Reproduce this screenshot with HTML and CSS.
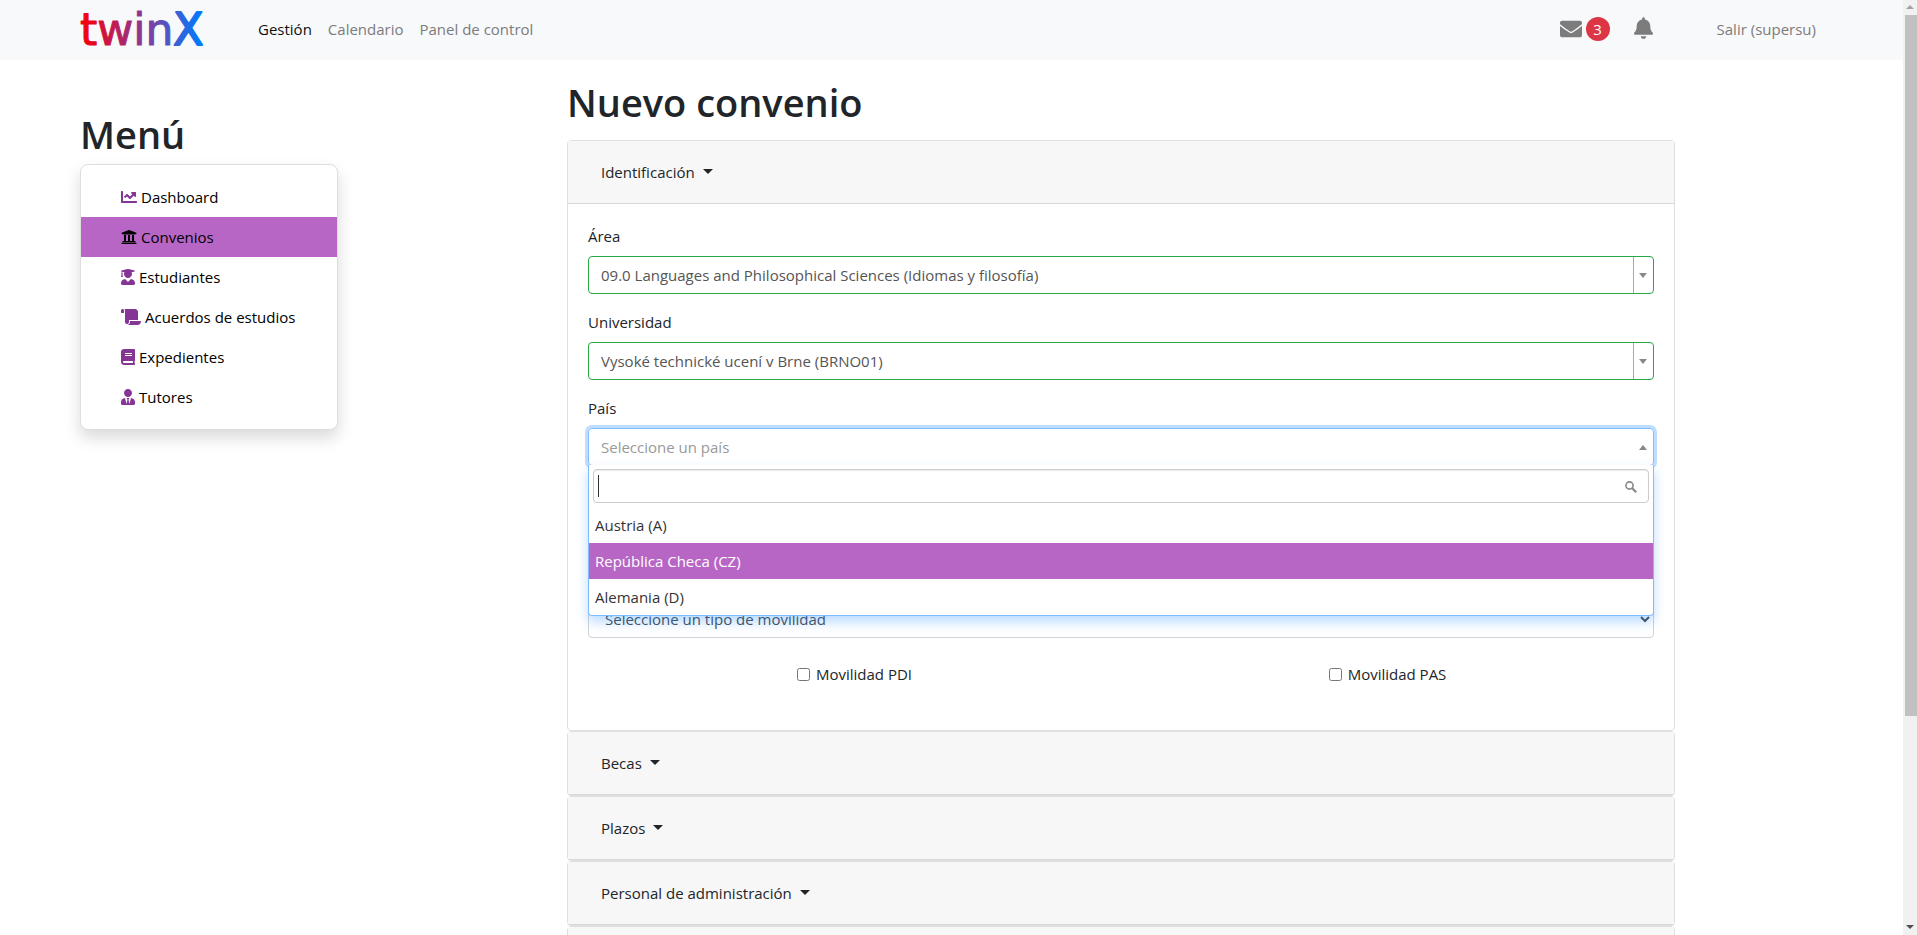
FILE: index.html
```html
<!DOCTYPE html>
<html lang="es">
<head>
<meta charset="utf-8">
<title>twinX - Nuevo convenio</title>
<link rel="stylesheet" href="styles.css">
</head>
<body>
<div class="page">
  <header class="navbar">
    <a class="brand" href="#" aria-label="twinX">
      <svg class="logo" width="136" height="58" viewBox="0 0 136 58">
        <defs>
          <linearGradient id="brand-gradient" gradientUnits="userSpaceOnUse" x1="8" y1="0" x2="122" y2="0">
            <stop offset="0" stop-color="#f00014"/>
            <stop offset="0.5" stop-color="#893a9a"/>
            <stop offset="1" stop-color="#007bff"/>
          </linearGradient>
        </defs>
        <text class="logo-word" x="1" y="45" fill="url(#brand-gradient)" stroke="url(#brand-gradient)" stroke-linejoin="round">twin<tspan class="logo-x">X</tspan></text>
      </svg>
    </a>
    <nav class="nav-links">
      <a class="nav-link current" href="#">Gestión</a>
      <a class="nav-link" href="#">Calendario</a>
      <a class="nav-link" href="#">Panel de control</a>
    </nav>
    <div class="nav-tools">
      <a class="mail" href="#" aria-label="Mensajes">
        <svg class="tool-icon" width="22" height="22" viewBox="0 0 512 512"><path d="M502.3 190.8c3.9-3.1 9.7-.2 9.7 4.7V400c0 26.5-21.5 48-48 48H48c-26.5 0-48-21.5-48-48V195.6c0-5 5.7-7.8 9.7-4.7 22.4 17.4 52.1 39.5 154.1 113.6 21.1 15.4 56.7 47.8 92.2 47.6 35.7.3 72-32.8 92.3-47.6 102-74.1 131.6-96.3 154-113.7zM256 320c23.2.4 56.6-29.2 73.4-41.4 132.7-96.3 142.8-104.7 173.4-128.7 5.8-4.5 9.2-11.5 9.2-18.9v-19c0-26.5-21.5-48-48-48H48c-26.5 0-48 21.5-48 48v19c0 7.4 3.4 14.3 9.2 18.9 30.6 23.9 40.7 32.4 173.4 128.7 16.8 12.2 50.2 41.8 73.4 41.4z"/></svg>
        <span class="badge">3</span>
      </a>
      <a class="bell" href="#" aria-label="Notificaciones">
        <svg class="tool-icon" width="19" height="22" viewBox="0 0 448 512"><path d="M224 512c35.32 0 63.97-28.65 63.97-64H160.03c0 35.35 28.65 64 63.97 64zm215.39-149.71c-19.32-20.76-55.47-51.99-55.47-154.29 0-77.7-54.48-139.9-127.94-155.16V32c0-17.67-14.32-32-31.98-32s-31.98 14.33-31.98 32v20.84C118.56 68.1 64.08 130.3 64.08 208c0 102.3-36.15 133.53-55.47 154.29-6 6.45-8.66 14.16-8.61 21.71.11 16.4 12.98 32 32.1 32h383.8c19.12 0 32-15.6 32.1-32 .05-7.55-2.61-15.27-8.61-21.71z"/></svg>
      </a>
      <a class="nav-link" href="#">Salir (supersu)</a>
    </div>
  </header>

  <div class="layout">
    <aside class="sidebar">
      <h2 class="title">Menú</h2>
      <nav class="menu">
        <a class="menu-item" href="#"><svg width="16" height="16" viewBox="0 0 512 512"><path d="M496 384H64V80c0-8.84-7.16-16-16-16H16C7.16 64 0 71.16 0 80v336c0 17.67 14.33 32 32 32h464c8.84 0 16-7.16 16-16v-32c0-8.84-7.16-16-16-16zM464 96H345.94c-21.38 0-32.09 25.85-16.97 40.97l32.4 32.4L288 242.75l-73.37-73.37c-12.5-12.5-32.76-12.5-45.25 0l-68.69 68.69c-6.25 6.25-6.25 16.38 0 22.63l22.62 22.62c6.25 6.25 16.38 6.25 22.63 0L192 237.25l73.37 73.37c12.5 12.5 32.76 12.5 45.25 0l96-96 32.4 32.4c15.12 15.12 40.97 4.41 40.97-16.97V112c.01-8.84-7.15-16-15.99-16z"/></svg>Dashboard</a>
        <a class="menu-item active" href="#"><svg width="16" height="16" viewBox="0 0 512 512"><path d="M496 128v16a8 8 0 0 1-8 8h-24v12c0 6.627-5.373 12-12 12H60c-6.627 0-12-5.373-12-12v-12H24a8 8 0 0 1-8-8v-16a8 8 0 0 1 4.941-7.392l232-88a7.996 7.996 0 0 1 6.118 0l232 88A8 8 0 0 1 496 128zm-24 304H40c-13.255 0-24 10.745-24 24v16a8 8 0 0 0 8 8h464a8 8 0 0 0 8-8v-16c0-13.255-10.745-24-24-24zM96 192v192H60c-6.627 0-12 5.373-12 12v20h416v-20c0-6.627-5.373-12-12-12h-36V192h-64v192h-64V192h-64v192h-64V192H96z"/></svg>Convenios</a>
        <a class="menu-item" href="#"><svg width="14" height="16" viewBox="0 0 448 512"><path d="M319.4 320.6L224 416l-95.4-95.4C57.1 323.7 0 382.2 0 454.4v9.6c0 26.5 21.5 48 48 48h352c26.5 0 48-21.5 48-48v-9.6c0-72.2-57.1-130.7-128.6-133.8zM13.6 79.8l6.4 1.5v58.4c-7 4.2-12 11.5-12 20.3 0 8.4 4.6 15.4 11.1 19.7L3.5 242c-1.7 6.9 2.1 14 7.6 14h41.8c5.5 0 9.3-7.1 7.6-14l-15.6-62.3C51.4 175.4 56 168.4 56 160c0-8.8-5-16.1-12-20.3V87.1l66 15.9c-8.6 17.2-14 36.4-14 57 0 70.7 57.3 128 128 128s128-57.3 128-128c0-20.6-5.3-39.8-14-57l96.3-23.2c18.2-4.4 18.2-27.1 0-31.5l-190.4-46c-13-3.1-26.7-3.1-39.7 0L13.6 48.2c-18.1 4.4-18.1 27.2 0 31.6z"/></svg>Estudiantes</a>
        <a class="menu-item" href="#"><svg width="20" height="16" viewBox="0 0 640 512"><path d="M48 0C21.53 0 0 21.53 0 48v64c0 8.84 7.16 16 16 16h80V48C96 21.53 74.47 0 48 0zm208 412.57V352h288V96c0-52.94-43.06-96-96-96H111.59C121.74 13.41 128 29.92 128 48v368c0 38.87 34.65 69.65 74.75 63.12C234.22 474 256 444.46 256 412.57zM288 384v32c0 52.93-43.06 96-96 96h336c61.86 0 112-50.14 112-112 0-8.84-7.16-16-16-16H288z"/></svg>Acuerdos de estudios</a>
        <a class="menu-item" href="#"><svg width="14" height="16" viewBox="0 0 448 512"><path d="M448 360V24c0-13.3-10.7-24-24-24H96C43 0 0 43 0 96v320c0 53 43 96 96 96h328c13.3 0 24-10.7 24-24v-16c0-7.5-3.5-14.3-8.9-18.7-4.2-15.4-4.2-59.3 0-74.7 5.4-4.3 8.9-11.1 8.9-18.6zM128 134c0-3.3 2.7-6 6-6h212c3.3 0 6 2.7 6 6v20c0 3.3-2.7 6-6 6H134c-3.3 0-6-2.7-6-6v-20zm0 64c0-3.3 2.7-6 6-6h212c3.3 0 6 2.7 6 6v20c0 3.3-2.7 6-6 6H134c-3.3 0-6-2.7-6-6v-20zm253.4 250H96c-17.7 0-32-14.3-32-32 0-17.6 14.4-32 32-32h285.4c-1.9 17.1-1.9 46.9 0 64z"/></svg>Expedientes</a>
        <a class="menu-item" href="#"><svg width="14" height="16" viewBox="0 0 448 512"><path d="M224 256c70.7 0 128-57.3 128-128S294.7 0 224 0 96 57.3 96 128s57.3 128 128 128zm95.8 32.6L272 480l-32-136 32-56h-96l32 56-32 136-47.8-191.4C56.9 292 0 350.3 0 422.4V464c0 26.5 21.5 48 48 48h352c26.5 0 48-21.5 48-48v-41.6c0-72.1-56.9-130.4-128.2-133.8z"/></svg>Tutores</a>
      </nav>
    </aside>

    <main class="content">
      <h1 class="title">Nuevo convenio</h1>

      <section class="card">
        <div class="card-header"><button class="toggle" type="button" aria-expanded="true">Identificación</button></div>
        <form class="card-body">
          <div class="field">
            <label for="area">Área</label>
            <div class="picker valid">
              <select id="area"><option>09.0 Languages and Philosophical Sciences (Idiomas y filosofía)</option></select>
              <span class="arrow"></span>
            </div>
          </div>
          <div class="field">
            <label for="universidad">Universidad</label>
            <div class="picker valid">
              <select id="universidad"><option>Vysoké technické ucení v Brne (BRNO01)</option></select>
              <span class="arrow"></span>
            </div>
          </div>
          <div class="field">
            <label for="pais">País</label>
            <div class="picker open">
              <select id="pais"><option>Seleccione un país</option></select>
              <span class="arrow"></span>
              <div class="dropdown">
                <div class="search">
                  <input class="search-input" type="text" aria-label="Buscar país">
                  <span class="text-cursor"></span>
                  <svg class="search-icon" width="12" height="12" viewBox="0 0 12 12"><circle cx="4.5" cy="4.5" r="3.6" fill="none" stroke="#888" stroke-width="1.6"/><path d="M7.2 7.2L11.2 11.2" stroke="#888" stroke-width="2.2"/></svg>
                </div>
                <ul class="options" role="listbox">
                  <li class="option" role="option">Austria (A)</li>
                  <li class="option highlighted" role="option" aria-selected="true">República Checa (CZ)</li>
                  <li class="option" role="option">Alemania (D)</li>
                </ul>
              </div>
            </div>
          </div>
          <div class="field mobility">
            <select class="native-select" aria-label="Tipo de movilidad"><option>Seleccione un tipo de movilidad</option></select>
          </div>
          <div class="checks">
            <label class="check" for="pdi"><input id="pdi" type="checkbox">Movilidad PDI</label>
            <label class="check" for="pas"><input id="pas" type="checkbox">Movilidad PAS</label>
          </div>
        </form>
      </section>
      <section class="card"><div class="card-header"><button class="toggle" type="button">Becas</button></div></section>
      <section class="card"><div class="card-header"><button class="toggle" type="button">Plazos</button></div></section>
      <section class="card"><div class="card-header"><button class="toggle" type="button">Personal de administración</button></div></section>
      <section class="card"><div class="card-header"></div></section>
    </main>
  </div>
</div>
<div class="scrollbar" aria-hidden="true">
  <span class="scroll-up"></span>
  <span class="scroll-thumb"></span>
  <span class="scroll-down"></span>
</div>
</body>
</html>
```
FILE: styles.css
```css
* { box-sizing: border-box; }

body {
  margin: 0;
  display: flex;
  height: 100vh;
  overflow: hidden;
  background: #fff;
  color: #212529;
  font-family: "Open Sans", "Noto Sans", sans-serif;
  font-size: 15px;
  line-height: 24px;
}

a { color: inherit; text-decoration: none; }

button, input, select { font: inherit; color: inherit; }

.page { flex: 1; min-width: 0; overflow: hidden; }

/* Top bar */
.navbar {
  display: flex;
  align-items: center;
  height: 60px;
  padding: 0 79px 2px;
  background: #f8f9fa;
}
.brand { display: flex; margin-right: 35px; }
.logo { display: block; }
.logo-word {
  font-family: "DejaVu Sans", sans-serif;
  font-size: 44px;
  stroke-width: 1;
}
.logo-x { stroke-width: 2; }
.nav-links { display: flex; }
.nav-link { padding: 0 8px; color: #7c7c7d; }
.nav-link.current { color: #111; }
.nav-tools { display: flex; align-items: center; margin-left: auto; }
.mail { display: flex; align-items: center; gap: 4px; }
.tool-icon { display: block; fill: #7c7c7c; }
.badge {
  width: 24px;
  height: 24px;
  border-radius: 50%;
  background: #dc3545;
  color: #fff;
  text-align: center;
}
.bell { margin: 0 56px 2px 24px; }

/* Page columns */
.layout {
  display: grid;
  grid-template-columns: 258px minmax(0, 1fr);
  column-gap: 229px;
  align-items: start;
  padding: 0 228px 0 80px;
}
.title {
  margin: 0;
  font-size: 38px;
  font-weight: 600;
  line-height: 52px;
}
.sidebar { padding-top: 48px; }
.content { padding-top: 16px; }
.content .title { margin-bottom: 12px; }

/* Side menu */
.menu {
  margin-top: 4px;
  padding: 12px 0;
  border: 1px solid #dfdfdf;
  border-radius: 8px;
  background: #fff;
  box-shadow: 0 8px 16px rgba(0, 0, 0, 0.15);
}
.menu-item {
  display: flex;
  align-items: center;
  gap: 4px;
  height: 40px;
  padding-left: 40px;
  color: #000;
}
.menu-item svg { fill: #853594; }
.menu-item.active { background: #b866c6; }
.menu-item.active svg { fill: #000; }

/* Accordion */
.card {
  border: 1px solid #dfdfdf;
  border-radius: 4px;
}
.card-header {
  min-height: 63px;
  padding: 12px 20px;
  border-bottom: 1px solid #d9d9d9;
  background: #f7f7f7;
}
.toggle {
  display: flex;
  align-items: center;
  gap: 8px;
  height: 38px;
  padding: 0 13px;
  border: 0;
  background: none;
}
.toggle::after {
  content: "";
  margin-bottom: 2px;
  border: 5px solid transparent;
  border-top-color: #212529;
  border-bottom: 0;
}
.card-body { padding: 20px 20px 44px; }

/* Form fields */
.field { margin-bottom: 16px; }
.field label { display: block; margin-bottom: 8px; }
.picker {
  position: relative;
  height: 38px;
  border: 1px solid #ced4da;
  border-radius: 4px;
}
.picker select {
  display: block;
  width: 100%;
  height: 100%;
  padding: 0 32px 0 12px;
  border: 0;
  background: none;
  color: #555;
  appearance: none;
}
.picker.valid { border-color: #28a745; }
.picker.open {
  border-color: #80bdff;
  box-shadow: 0 0 0 3px #bfdeff;
}
.picker.open select { color: #999; }
.arrow {
  position: absolute;
  top: 0;
  right: 0;
  bottom: 0;
  width: 20px;
  padding-right: 2px;
  display: grid;
  place-items: center;
  border-left: 1px solid #aaa;
}
.arrow::after {
  content: "";
  border: 4px solid transparent;
  border-top: 5px solid #888;
  border-bottom: 0;
}
.open .arrow { border-left-color: transparent; }
.open .arrow::after {
  border: 4px solid transparent;
  border-top: 0;
  border-bottom: 5px solid #888;
}

.dropdown {
  position: absolute;
  z-index: 2;
  top: 36px;
  left: -1px;
  right: -1px;
  border: 1px solid #80bdff;
  border-top: 0;
  border-radius: 0 0 4px 4px;
  background: #fff;
  box-shadow: 0 6px 12px rgba(0, 123, 255, 0.27);
}
.search { position: relative; padding: 4px; }
.search-input {
  display: block;
  width: 100%;
  height: 34px;
  padding: 4px 32px 4px 6px;
  border: 1px solid #ccc;
  border-radius: 4px;
  outline: 0;
  box-shadow: inset 0 1px 1px rgba(0, 0, 0, 0.08);
}
.text-cursor {
  position: absolute;
  top: 10px;
  left: 9px;
  width: 1px;
  height: 22px;
  background: #333;
}
.search-icon { position: absolute; top: 16px; right: 16px; }
.options { margin: 0; padding: 0; list-style: none; }
.option { padding: 6px; color: #333; }
.option.highlighted { background: #b866c6; color: #fff; }

/* The open list covers the space above this field */
.mobility { margin-top: 134px; }
.native-select {
  display: block;
  width: 100%;
  height: 38px;
  padding: 6px 12px;
  border: 1px solid #ced4da;
  border-radius: 4px;
  background: #fff;
  color: #495057;
}
.checks {
  display: grid;
  grid-template-columns: 1fr 1fr;
  padding-top: 8px;
}
.check {
  display: flex;
  align-items: center;
  justify-content: center;
  gap: 6px;
}
.check input { width: 13px; height: 13px; margin: 0; }

/* Scroll track */
.scrollbar {
  display: flex;
  flex-direction: column;
  align-items: center;
  width: 14px;
  background: #f1f1f1;
}
.scroll-up, .scroll-down { border: 4px solid transparent; }
.scroll-up { margin: 5px 0 6px; border-top: 0; border-bottom-color: #a3a3a3; }
.scroll-thumb { flex: 0 0 75%; align-self: flex-end; width: 12px; background: #c1c1c1; }
.scroll-down { margin: auto 0 6px; border-bottom: 0; border-top-color: #505050; }
```
